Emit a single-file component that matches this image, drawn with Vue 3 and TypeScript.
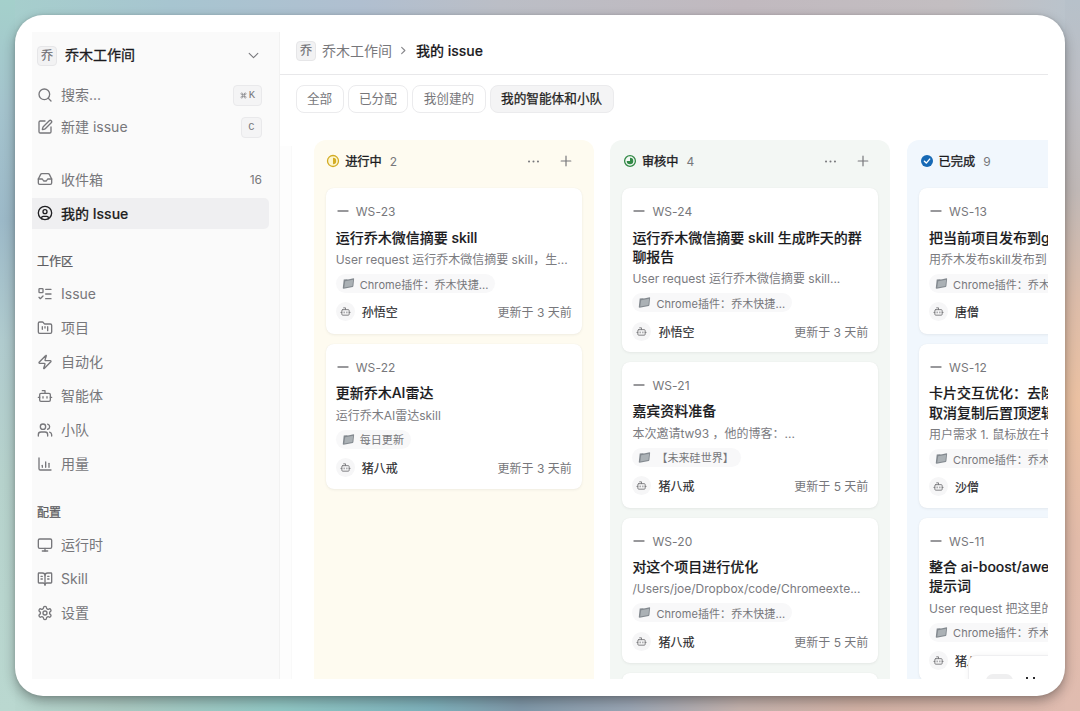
<script setup lang="ts">
interface NavItem {
  label: string
  icon: string
  count?: string
  active?: boolean
}
interface Card {
  id: string
  title: string[]
  desc: string
  project: string
  who: string
  updated: string
}
interface Column {
  name: string
  count: number
  tone: 'progress' | 'review' | 'done'
  cards: Card[]
}

const icons: Record<string, string> = {
  search: '<circle cx="11" cy="11" r="8"/><path d="m21 21-4.3-4.3"/>',
  edit: '<path d="M12 3H5a2 2 0 0 0-2 2v14a2 2 0 0 0 2 2h14a2 2 0 0 0 2-2v-7"/><path d="M18.375 2.625a1 1 0 0 1 3 3l-9.013 9.014a2 2 0 0 1-.853.505l-2.873.84a.5.5 0 0 1-.62-.62l.84-2.873a2 2 0 0 1 .506-.852z"/>',
  inbox: '<path d="M22 12h-6l-2 3h-4l-2-3H2"/><path d="M5.45 5.11 2 12v6a2 2 0 0 0 2 2h16a2 2 0 0 0 2-2v-6l-3.45-6.89A2 2 0 0 0 16.76 4H7.24a2 2 0 0 0-1.79 1.11z"/>',
  user: '<circle cx="12" cy="12" r="10"/><circle cx="12" cy="10" r="3"/><path d="M7 20.66V19a2 2 0 0 1 2-2h6a2 2 0 0 1 2 2v1.66"/>',
  todo: '<rect x="3" y="4" width="6" height="6" rx="1"/><path d="m3 17 2 2 4-4"/><path d="M13 5h8"/><path d="M13 12h8"/><path d="M13 19h8"/>',
  kanban: '<path d="M4 20h16a2 2 0 0 0 2-2V8a2 2 0 0 0-2-2h-7.93a2 2 0 0 1-1.66-.9l-.82-1.2A2 2 0 0 0 7.93 3H4a2 2 0 0 0-2 2v13a2 2 0 0 0 2 2Z"/><path d="M8 10v4"/><path d="M12 10v2"/><path d="M16 10v6"/>',
  zap: '<path d="M4 14a1 1 0 0 1-.78-1.63l9.9-10.2a.5.5 0 0 1 .86.46l-1.92 6.02A1 1 0 0 0 13 10h7a1 1 0 0 1 .78 1.63l-9.9 10.2a.5.5 0 0 1-.86-.46l1.92-6.02A1 1 0 0 0 11 14z"/>',
  bot: '<path d="M12 8V4H8"/><rect width="16" height="12" x="4" y="8" rx="2"/><path d="M2 14h2"/><path d="M20 14h2"/><path d="M15 13v2"/><path d="M9 13v2"/>',
  users: '<path d="M16 21v-2a4 4 0 0 0-4-4H6a4 4 0 0 0-4 4v2"/><circle cx="9" cy="7" r="4"/><path d="M22 21v-2a4 4 0 0 0-3-3.87"/><path d="M16 3.13a4 4 0 0 1 0 7.75"/>',
  chart: '<path d="M3 3v16a2 2 0 0 0 2 2h16"/><path d="M8 17v-3"/><path d="M13 17V9"/><path d="M18 17v-6"/>',
  monitor: '<rect width="20" height="14" x="2" y="3" rx="2"/><path d="M8 21h8"/><path d="M12 17v4"/>',
  book: '<path d="M12 7v14"/><path d="M16 12h2"/><path d="M16 8h2"/><path d="M3 18a1 1 0 0 1-1-1V4a1 1 0 0 1 1-1h5a4 4 0 0 1 4 4 4 4 0 0 1 4-4h5a1 1 0 0 1 1 1v13a1 1 0 0 1-1 1h-6a3 3 0 0 0-3 3 3 3 0 0 0-3-3z"/><path d="M6 12h2"/><path d="M6 8h2"/>',
  gear: '<path d="M12.22 2h-.44a2 2 0 0 0-2 2v.18a2 2 0 0 1-1 1.73l-.43.25a2 2 0 0 1-2 0l-.15-.08a2 2 0 0 0-2.73.73l-.22.38a2 2 0 0 0 .73 2.73l.15.1a2 2 0 0 1 1 1.72v.51a2 2 0 0 1-1 1.74l-.15.09a2 2 0 0 0-.73 2.73l.22.38a2 2 0 0 0 2.73.73l.15-.08a2 2 0 0 1 2 0l.43.25a2 2 0 0 1 1 1.73V20a2 2 0 0 0 2 2h.44a2 2 0 0 0 2-2v-.18a2 2 0 0 1 1-1.73l.43-.25a2 2 0 0 1 2 0l.15.08a2 2 0 0 0 2.73-.73l.22-.39a2 2 0 0 0-.73-2.73l-.15-.08a2 2 0 0 1-1-1.74v-.5a2 2 0 0 1 1-1.74l.15-.09a2 2 0 0 0 .73-2.73l-.22-.38a2 2 0 0 0-2.73-.73l-.15.08a2 2 0 0 1-2 0l-.43-.25a2 2 0 0 1-1-1.73V4a2 2 0 0 0-2-2z"/><circle cx="12" cy="12" r="3"/>',
}

const personal: NavItem[] = [
  { label: '收件箱', icon: 'inbox', count: '16' },
  { label: '我的 Issue', icon: 'user', active: true },
]
const groups: { name: string; items: NavItem[] }[] = [
  {
    name: '工作区',
    items: [
      { label: 'Issue', icon: 'todo' },
      { label: '项目', icon: 'kanban' },
      { label: '自动化', icon: 'zap' },
      { label: '智能体', icon: 'bot' },
      { label: '小队', icon: 'users' },
      { label: '用量', icon: 'chart' },
    ],
  },
  {
    name: '配置',
    items: [
      { label: '运行时', icon: 'monitor' },
      { label: 'Skill', icon: 'book' },
      { label: '设置', icon: 'gear' },
    ],
  },
]

const tabs = ['全部', '已分配', '我创建的', '我的智能体和小队']
const plugin = 'Chrome插件：乔木快捷...'

const columns: Column[] = [
  {
    name: '进行中',
    count: 2,
    tone: 'progress',
    cards: [
      { id: 'WS-23', title: ['运行乔木微信摘要 skill'], desc: 'User request 运行乔木微信摘要 skill，生...', project: plugin, who: '孙悟空', updated: '更新于 3 天前' },
      { id: 'WS-22', title: ['更新乔木AI雷达'], desc: '运行乔木AI雷达skill', project: '每日更新', who: '猪八戒', updated: '更新于 3 天前' },
    ],
  },
  {
    name: '审核中',
    count: 4,
    tone: 'review',
    cards: [
      { id: 'WS-24', title: ['运行乔木微信摘要 skill 生成昨天的群', '聊报告'], desc: 'User request 运行乔木微信摘要 skill...', project: plugin, who: '孙悟空', updated: '更新于 3 天前' },
      { id: 'WS-21', title: ['嘉宾资料准备'], desc: '本次邀请tw93 ，他的博客：...', project: '【未来硅世界】', who: '猪八戒', updated: '更新于 5 天前' },
      { id: 'WS-20', title: ['对这个项目进行优化'], desc: '/Users/joe/Dropbox/code/Chromeexte...', project: plugin, who: '猪八戒', updated: '更新于 5 天前' },
      { id: '', title: [''], desc: '', project: '', who: '', updated: '' },
    ],
  },
  {
    name: '已完成',
    count: 9,
    tone: 'done',
    cards: [
      { id: 'WS-13', title: ['把当前项目发布到g'], desc: '用乔木发布skill发布到', project: plugin, who: '唐僧', updated: '' },
      { id: 'WS-12', title: ['卡片交互优化：去除', '取消复制后置顶逻辑'], desc: '用户需求 1. 鼠标放在卡', project: plugin, who: '沙僧', updated: '' },
      { id: 'WS-11', title: ['整合 ai-boost/awe', '提示词'], desc: 'User request 把这里的', project: plugin, who: '猪八戒', updated: '' },
    ],
  },
]
</script>

<template>
  <div class="desktop">
    <div class="window">
      <div class="screen">
        <aside class="sidebar">
          <div class="workspace">
            <span class="badge">乔</span>
            <span class="workspace-name">乔木工作间</span>
            <svg class="chevron" viewBox="0 0 24 24"><path d="m4 8 8 8 8-8" /></svg>
          </div>
          <div class="action">
            <svg class="icon" viewBox="0 0 24 24" v-html="icons.search" />
            <span class="grow">搜索...</span>
            <kbd>
              <svg class="cmd" viewBox="0 0 24 24"><path d="M15 6v12a3 3 0 1 0 3-3H6a3 3 0 1 0 3 3V6a3 3 0 1 0-3 3h12a3 3 0 1 0-3-3" /></svg>K
            </kbd>
          </div>
          <div class="action">
            <svg class="icon" viewBox="0 0 24 24" v-html="icons.edit" />
            <span class="grow">新建 issue</span>
            <kbd class="single">C</kbd>
          </div>
          <nav class="personal">
            <div v-for="n in personal" :key="n.label" class="item" :class="{ active: n.active }">
              <svg class="icon" viewBox="0 0 24 24" v-html="icons[n.icon]" />
              <span class="grow">{{ n.label }}</span>
              <span v-if="n.count" class="unread">{{ n.count }}</span>
            </div>
          </nav>
          <nav v-for="g in groups" :key="g.name">
            <div class="group-name">{{ g.name }}</div>
            <div v-for="n in g.items" :key="n.label" class="item">
              <svg class="icon" viewBox="0 0 24 24" v-html="icons[n.icon]" />
              <span class="grow">{{ n.label }}</span>
            </div>
          </nav>
        </aside>

        <main class="main">
          <header class="crumbs">
            <span class="badge">乔</span>
            <span class="crumb">乔木工作间</span>
            <svg class="sep" viewBox="0 0 24 24"><path d="m8 5 7 7-7 7" /></svg>
            <span class="current">我的 issue</span>
          </header>
          <div class="tabs">
            <span v-for="(t, i) in tabs" :key="t" class="tab" :class="{ on: i === 3 }">{{ t }}</span>
          </div>
          <div class="board">
            <div class="edge-column"></div>
            <section v-for="c in columns" :key="c.name" class="column" :class="c.tone">
              <div class="column-head">
                <svg v-if="c.tone === 'progress'" class="status" viewBox="0 0 14 14">
                  <circle cx="7" cy="7" r="5.5" fill="#fdf6d0" stroke="#d3ac25" stroke-width="1.3" />
                  <path d="M7 3.8a3.2 3.2 0 0 1 0 6.4z" fill="#d3ac25" />
                </svg>
                <svg v-else-if="c.tone === 'review'" class="status" viewBox="0 0 14 14">
                  <circle cx="7" cy="7" r="5.4" fill="none" stroke="#318945" stroke-width="1.3" />
                  <path d="M7 7V3.7A3.3 3.3 0 1 1 3.7 7z" fill="#318945" />
                </svg>
                <svg v-else class="status" viewBox="0 0 14 14">
                  <circle cx="7" cy="7" r="6" fill="#1769b5" />
                  <path d="m4.4 7.2 1.9 1.9 3.4-4" fill="none" stroke="#fff" stroke-width="1.4" stroke-linecap="round" stroke-linejoin="round" />
                </svg>
                <span class="column-name">{{ c.name }}</span>
                <span class="column-count">{{ c.count }}</span>
                <svg class="more" viewBox="0 0 14 14"><circle cx="2.2" cy="7" r="1.1" /><circle cx="7" cy="7" r="1.1" /><circle cx="11.8" cy="7" r="1.1" /></svg>
                <svg class="plus" viewBox="0 0 14 14"><path d="M7 2.2v9.6M2.2 7h9.6" /></svg>
              </div>
              <article v-for="(k, i) in c.cards" :key="i" class="card">
                <template v-if="k.id">
                  <div class="card-id">
                    <svg class="dash" viewBox="0 0 12 4"><path d="M1 2h10" /></svg>{{ k.id }}
                  </div>
                  <div class="card-title">
                    <div v-for="line in k.title" :key="line" class="title-line">{{ line }}</div>
                  </div>
                  <div class="card-desc">{{ k.desc }}</div>
                  <div class="chip">
                    <svg class="folder" viewBox="0 0 12 12">
                      <path d="M1.6 2.4 4.6 2 5.4 2.4 10.8 1.2 11.2 1.7 10.5 8.6 9.9 9.3 1.4 10.9.7 10.3z" fill="#83898f" />
                      <path d="M2.9 4 10.3 2.5 9.6 8.2 2.1 9.8z" fill="#abb1b5" />
                    </svg>
                    <span>{{ k.project }}</span>
                  </div>
                  <div class="card-foot">
                    <span class="avatar"><svg viewBox="0 0 24 24" v-html="icons.bot" /></span>
                    <span class="who">{{ k.who }}</span>
                    <span class="updated">{{ k.updated }}</span>
                  </div>
                </template>
              </article>
            </section>
          </div>
        </main>
        <div class="toast">
          <span class="toast-pill"></span>
          <span class="toast-mark"></span>
        </div>
      </div>
    </div>
  </div>
</template>

<style>
html,
body {
  margin: 0;
  overflow: hidden;
}
</style>

<style scoped>
.desktop {
  box-sizing: border-box;
  width: 1080px;
  height: 711px;
  padding: 15px;
  font-family: Inter, 'Noto Sans CJK SC', sans-serif;
  background:
    linear-gradient(180deg, #a4d0cb 0, #a4c3cd 110px, #9cb9c8 220px, #b0cbce 340px, #b6d2cc 480px, #bad8d0 711px) 0 0 / 15px 711px no-repeat,
    linear-gradient(180deg, #b7c1ca 0, #bdbec4 90px, #c0b8b6 190px, #dcbca9 300px, #ebc1a2 400px, #e2bba9 540px, #e0bcb0 711px) 1065px 0 / 15px 711px no-repeat,
    linear-gradient(90deg, #a6cfcc 0, #a7c5d0 170px, #b0bfd0 360px, #bbbec6 500px, #c1b9bf 740px, #c3bec1 950px, #b9c4cd 1080px) 0 0 / 1080px 50px no-repeat,
    linear-gradient(90deg, #bad8d0 0, #accbc3 120px, #91c8c5 280px, #7eb2bc 430px, #8099aa 520px, #9ba6b5 630px, #c5b3ae 740px, #d3b2a5 860px, #e0bcb0 1080px) 0 661px / 1080px 50px no-repeat;
}
.window {
  box-sizing: border-box;
  width: 1050px;
  height: 681px;
  padding: 17px;
  border-radius: 28px;
  background: #fff;
  box-shadow: 0 5px 12px rgba(30, 30, 30, 0.38), 0 0 3px rgba(40, 40, 40, 0.15);
}
.screen {
  position: relative;
  display: flex;
  width: 1016px;
  height: 647px;
  overflow: hidden;
}
svg {
  fill: none;
  stroke: currentColor;
  stroke-width: 2;
  stroke-linecap: round;
  stroke-linejoin: round;
  flex: none;
}
.sidebar {
  box-sizing: border-box;
  width: 248px;
  flex: none;
  padding-top: 8px;
  background: #fafafa;
  border-right: 1px solid #f2f2f2;
  font-size: 14px;
  color: #77777b;
}
.workspace {
  display: flex;
  align-items: center;
  height: 31px;
  padding: 0 19px 0 5px;
}
.badge {
  box-sizing: border-box;
  width: 20px;
  height: 20px;
  border: 1px solid #e6e6e8;
  border-radius: 4px;
  background: #f2f2f3;
  color: #6f6f73;
  font-size: 12px;
  line-height: 17px;
  text-align: center;
  -webkit-text-stroke: 0.2px #6f6f73;
}
.workspace-name {
  flex: 1;
  margin-left: 8px;
  padding-bottom: 3px;
  color: #1b1b1e;
  -webkit-text-stroke: 0.3px #1b1b1e;
}
.chevron {
  width: 13px;
  height: 13px;
  color: #77777b;
}
.action {
  display: flex;
  align-items: center;
  height: 32px;
  padding: 0 7px 0 5px;
}
.workspace + .action {
  margin-top: 8px;
}
.action .grow {
  padding-bottom: 2px;
}
.icon {
  width: 16px;
  height: 16px;
  margin-right: 8px;
}
.grow {
  flex: 1;
  padding-bottom: 1px;
}
kbd {
  box-sizing: border-box;
  display: flex;
  align-items: center;
  justify-content: center;
  gap: 2px;
  width: 29px;
  height: 21px;
  margin-right: 10px;
  border: 1px solid #e9e9eb;
  border-radius: 4px;
  background: #f4f4f5;
  font-family: 'Liberation Mono', monospace;
  font-size: 10.5px;
}
kbd.single {
  width: 21px;
}
.cmd {
  width: 7px;
  height: 7px;
}
.personal {
  margin-top: 20px;
}
.item {
  box-sizing: border-box;
  display: flex;
  align-items: center;
  width: 237px;
  height: 31px;
  margin-bottom: 3px;
  padding: 0 7px 0 5px;
  border-radius: 0 5px 5px 0;
}
.personal .item {
  position: relative;
  top: 0.6px;
}
.item.active {
  background: #efeff1;
  color: #1f1f22;
  font-weight: 500;
}
.item.active .grow {
  -webkit-text-stroke: 0.15px #1f1f22;
}
.unread {
  font-size: 12px;
}
.group-name {
  height: 20px;
  margin: 24px 0 6px;
  padding-left: 5px;
  font-size: 12px;
  line-height: 20px;
  color: #5d5d61;
  -webkit-text-stroke: 0.25px #5d5d61;
}
.main {
  flex: 1;
  min-width: 0;
  display: flex;
  flex-direction: column;
}
.crumbs {
  box-sizing: border-box;
  display: flex;
  align-items: center;
  height: 43px;
  padding: 0 0 6px 16px;
  border-bottom: 1px solid #e8e8ea;
  font-size: 14px;
}
.crumbs .badge {
  margin-top: 1px;
}
.crumb {
  margin-left: 6px;
  padding-bottom: 1px;
  color: #77777b;
}
.sep {
  width: 11px;
  height: 11px;
  margin: 1px 7px 0 6px;
  stroke-width: 2.5;
  color: #88888c;
}
.current {
  padding-bottom: 1px;
  color: #1b1b1e;
  font-weight: 500;
  -webkit-text-stroke: 0.15px #1b1b1e;
}
.tabs {
  display: flex;
  gap: 4px;
  height: 28px;
  margin: 10px 0 0 15.5px;
}
.tab {
  box-sizing: border-box;
  height: 28px;
  padding: 0 10.4px;
  border: 1px solid #ebebed;
  border-radius: 8px;
  font-size: 12.65px;
  line-height: 26px;
  color: #77777b;
  white-space: nowrap;
}
.tab.on {
  background: #f4f4f5;
  color: #1f1f22;
  -webkit-text-stroke: 0.25px #1f1f22;
}
.board {
  flex: 1;
  min-height: 0;
  display: flex;
  gap: 16.7px;
  margin-top: 27px;
  overflow: hidden;
}
.edge-column {
  flex: none;
  width: 12px;
  margin: 6px 5px 0 0;
  background: #fdfdfd;
  border-right: 1px solid #f9f9f9;
  box-sizing: border-box;
}
.column {
  box-sizing: border-box;
  flex: none;
  width: 280px;
  padding: 0 12px;
  border-radius: 12px 12px 0 0;
}
.progress {
  background: #fefbf0;
}
.review {
  background: #f3f7f4;
}
.done {
  background: #f1f7fd;
}
.column-head {
  display: flex;
  align-items: center;
  height: 42px;
  margin-bottom: 6.2px;
  padding: 0 8.5px 0 0.5px;
}
.status {
  width: 14px;
  height: 14px;
  stroke: none;
}
.column-name {
  margin-left: 5px;
  font-size: 12.2px;
  color: #1b1b1e;
  -webkit-text-stroke: 0.35px #1b1b1e;
}
.column-count {
  flex: 1;
  margin-left: 8px;
  font-size: 12px;
  color: #77777b;
}
.more {
  width: 13px;
  height: 13px;
  margin-right: 19px;
  fill: #77777b;
  stroke: none;
}
.plus {
  width: 14px;
  height: 14px;
  stroke-width: 1.2;
  color: #77777b;
}
.card {
  box-sizing: border-box;
  min-height: 145.6px;
  margin-bottom: 10px;
  padding: 13.5px 10px 10.7px;
  border-radius: 8px;
  background: #fff;
  box-shadow: 0 1px 3px rgba(0, 0, 0, 0.06), 0 0 1px rgba(0, 0, 0, 0.06);
  white-space: nowrap;
}
.card-id {
  display: flex;
  align-items: center;
  height: 20px;
  font-size: 12px;
  letter-spacing: 0.1px;
  color: #77777b;
}
.dash {
  width: 12px;
  height: 4px;
  margin: -1px 7px 0 1px;
  stroke-width: 1.3;
}
.card-title {
  margin-top: 6px;
  font-size: 14px;
  font-weight: 500;
  color: #1b1b1e;
  -webkit-text-stroke: 0.15px #1b1b1e;
}
.title-line {
  height: 19.4px;
  line-height: 19.4px;
}
.card-desc {
  height: 18px;
  margin-top: 4px;
  font-size: 12px;
  line-height: 18px;
  color: #7b7b7f;
}
.chip {
  display: inline-flex;
  align-items: center;
  height: 19px;
  margin-top: 5px;
  padding: 0 7px 0 6px;
  border-radius: 10px;
  background: #f8f8f9;
  font-size: 11px;
  letter-spacing: 0.07px;
  color: #77777b;
  vertical-align: top;
}
.folder {
  width: 13px;
  height: 13px;
  margin-right: 5px;
  stroke: none;
}
.card-foot {
  display: flex;
  align-items: center;
  height: 20px;
  margin-top: 8.8px;
  font-size: 12px;
  color: #77777b;
}
.avatar {
  display: flex;
  align-items: center;
  justify-content: center;
  width: 19px;
  height: 19px;
  border-radius: 50%;
  background: #f6f6f7;
}
.avatar svg {
  width: 11px;
  height: 11px;
}
.who {
  flex: 1;
  margin-left: 7px;
  color: #2b2b2e;
  -webkit-text-stroke: 0.15px #2b2b2e;
}
.toast {
  position: absolute;
  left: 936px;
  top: 622.5px;
  box-sizing: border-box;
  display: flex;
  width: 100px;
  height: 40px;
  padding: 18px 0 0 17px;
  border: 1px solid #efeff1;
  border-radius: 8px 0 0 0;
  background: #fff;
  box-shadow: 0 0 5px rgba(0, 0, 0, 0.05);
}
.toast-pill {
  width: 27px;
  height: 14px;
  border-radius: 8px;
  background: #efeff0;
}
.toast-mark {
  box-sizing: border-box;
  width: 9px;
  height: 12px;
  margin: 3px 0 0 13px;
  border: solid #2b2b2e;
  border-width: 0 2px;
}
</style>
